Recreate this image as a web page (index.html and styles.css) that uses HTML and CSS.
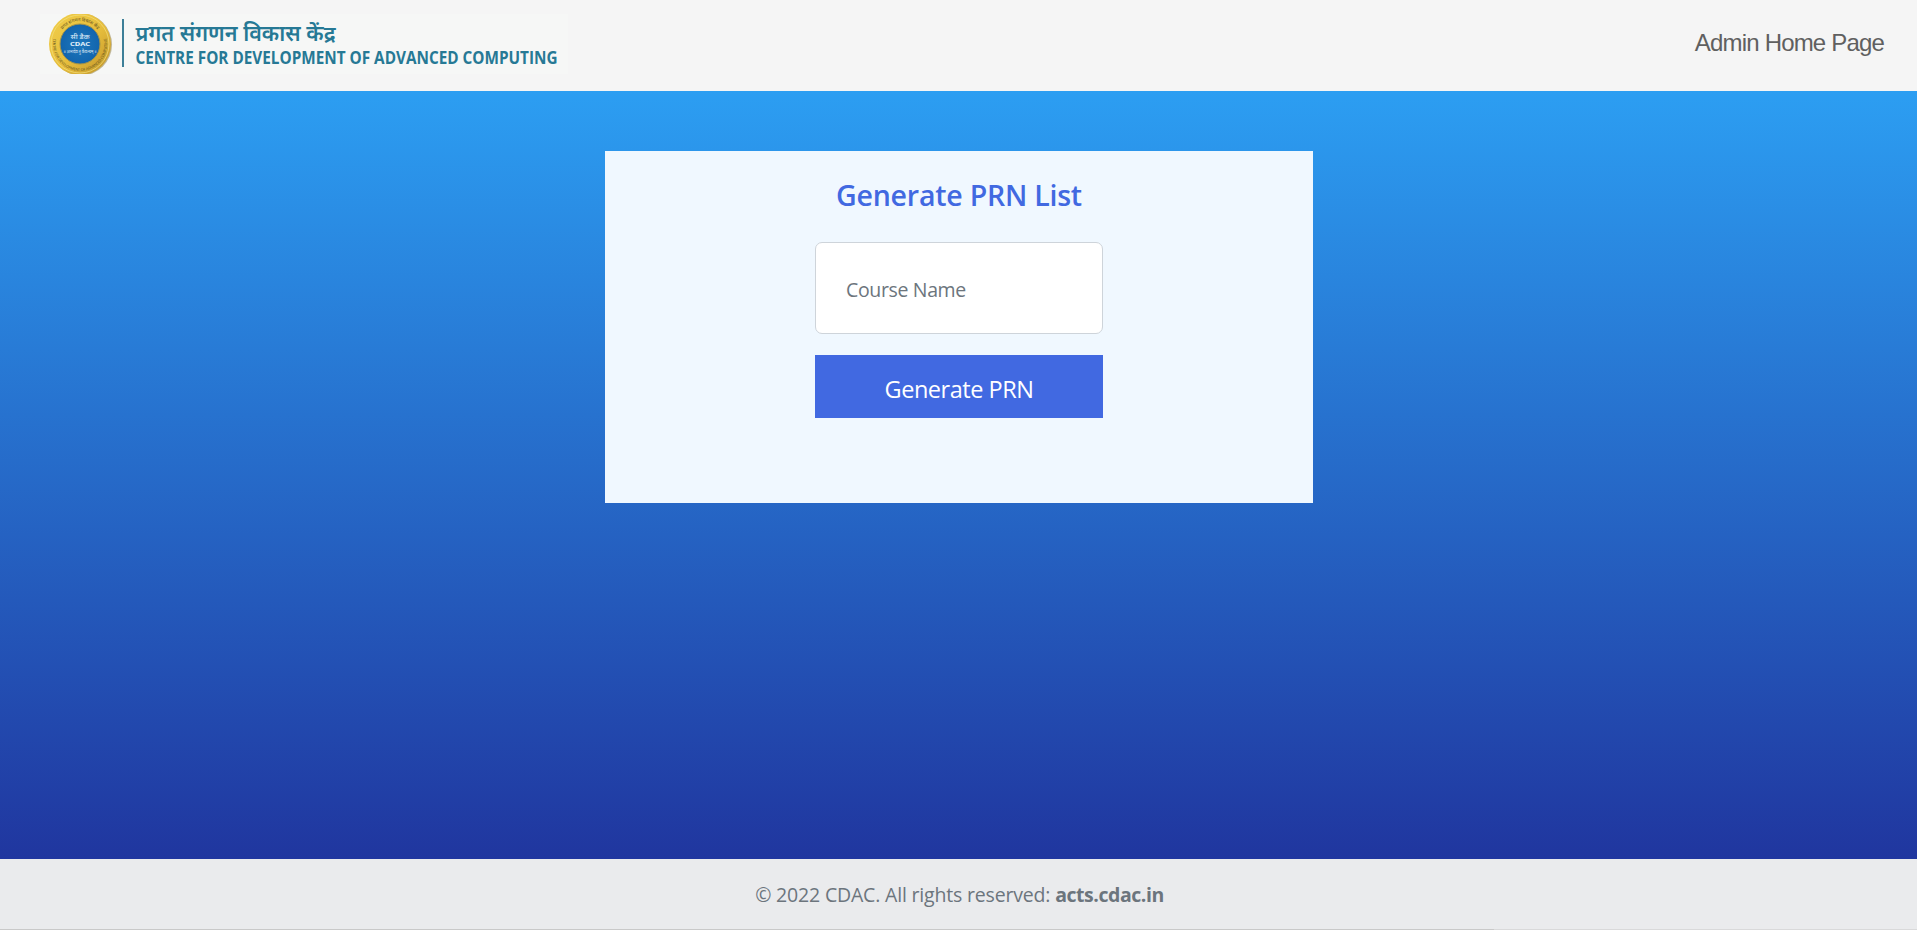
FILE: index.html
```html
<!DOCTYPE html>
<html lang="en">
<head>
<meta charset="utf-8">
<title>Generate PRN List</title>
<link rel="stylesheet" href="styles.css">
</head>
<body>
<header class="navbar">
  <svg class="logo" width="528" height="60" viewBox="0 0 528 60" role="img">
    <defs>
      <linearGradient id="gold" x1="0" y1="0" x2="1" y2="1">
        <stop offset="0" stop-color="#f1cf4a"/><stop offset=".55" stop-color="#e6bd3c"/><stop offset="1" stop-color="#bd9128"/>
      </linearGradient>
      <radialGradient id="blue"><stop offset="0" stop-color="#1c78bd"/><stop offset="1" stop-color="#1264ad"/></radialGradient>
      <path id="arcTop" d="M17.500 33A22.700 22.700 0 1 1 62.500 33"/>
      <path id="arcBottom" d="M14.200 22A27 27 0 1 0 65.800 22"/>
    </defs>
    <rect width="528" height="60" fill="#f6f7f6"/>
    <circle cx="41" cy="30.500" r="31" fill="#9b8b59" opacity=".6"/>
    <circle cx="40" cy="30" r="31" fill="url(#gold)"/>
    <circle cx="40" cy="30" r="29" fill="none" stroke="#f3df7c" stroke-width="1" opacity=".7"/>
    <circle cx="40" cy="30" r="20" fill="url(#blue)" stroke="#a69447" stroke-width="1"/>
    <g class="seal-ring">
      <text font-size="4.500"><textPath href="#arcTop" startOffset="50%" text-anchor="middle">प्रगत संगणन विकास केंद्र</textPath></text>
      <text font-size="3.600"><textPath href="#arcBottom" startOffset="50%" text-anchor="middle">CENTRE FOR DEVELOPMENT OF ADVANCED COMPUTING</textPath></text>
    </g>
    <g class="seal-text">
      <text x="40" y="24.500" font-size="6.500" textLength="19" lengthAdjust="spacingAndGlyphs">सी डैक</text>
      <text x="40" y="32" font-size="5.500" font-weight="700" textLength="20" lengthAdjust="spacingAndGlyphs">CDAC</text>
      <text x="40" y="38.500" font-size="4" textLength="33" lengthAdjust="spacingAndGlyphs">॥ ज्ञानादेव तु कैवल्यम् ॥</text>
    </g>
    <rect x="82" y="5" width="2" height="48" fill="#3d7f98"/>
    <text class="logo-hindi" x="95.500" y="27" textLength="200" lengthAdjust="spacingAndGlyphs">प्रगत संगणन विकास केंद्र</text>
    <text class="logo-english" x="95.500" y="50" textLength="422" lengthAdjust="spacingAndGlyphs">CENTRE FOR DEVELOPMENT OF ADVANCED COMPUTING</text>
  </svg>
  <a class="nav-link">Admin Home Page</a>
</header>
<main class="page">
  <form class="card">
    <h2 class="card-title">Generate PRN List</h2>
    <input class="course-input" type="text" placeholder="Course Name">
    <button class="submit" type="button"><span>Generate PRN</span></button>
  </form>
</main>
<footer class="footer"><p class="copyright">© 2022 CDAC. All rights reserved: <strong>acts.cdac.in</strong></p></footer>
<div class="bottom-line"></div>
</body>
</html>
```

FILE: styles.css
```css
* { box-sizing: border-box; }
body {
  margin: 0;
  height: 930px;
  display: flex;
  flex-direction: column;
  overflow: hidden;
  font-family: "Open Sans", "Noto Sans", sans-serif;
}
.navbar {
  height: 91px;
  flex: none;
  display: flex;
  justify-content: space-between;
  align-items: flex-start;
  padding: 14px 33px 0 40px;
  background: #f5f5f5;
}
.logo { display: block; }
.seal-ring { fill: #66551f; font-family: "Noto Sans", sans-serif; }
.seal-text { fill: #e4f1fa; text-anchor: middle; font-family: "Noto Sans", sans-serif; }
.logo-hindi { fill: #267995; font: 600 22px "Noto Sans", sans-serif; }
.logo-english { fill: #267995; font: 700 18px "Open Sans", sans-serif; }
.nav-link {
  margin-top: 15px;
  font: 24px/28px "Liberation Sans", sans-serif;
  letter-spacing: -0.820px;
  color: #606060;
}
.page {
  height: 768px;
  flex: none;
  display: flex;
  justify-content: center;
  align-items: flex-start;
  padding: 60px 0 0 1px;
  background: linear-gradient(180deg, #2c9ef2, #20369f);
}
.card {
  width: 708px;
  height: 352px;
  display: flex;
  flex-direction: column;
  align-items: center;
  padding-top: 24px;
  background: #f0f8ff;
}
.card-title {
  margin: 0 0 27px;
  font-size: 28.500px;
  font-weight: 600;
  line-height: 40px;
  letter-spacing: -0.220px;
  white-space: nowrap;
  color: #4169e1;
}
.course-input {
  width: 288px;
  height: 92px;
  margin-bottom: 21px;
  padding: 2px 30px 0;
  border: 1px solid #ced4da;
  border-radius: 7px;
  background: #fff;
  font: 19.500px "Open Sans", sans-serif;
  letter-spacing: -0.350px;
}
.course-input::placeholder { color: #6c757d; opacity: 1; }
.submit {
  width: 288px;
  height: 63px;
  padding: 4px 0 0;
  border: 0;
  background: #4169e1;
  color: #fff;
  font: 23.500px "Open Sans", sans-serif;
  letter-spacing: -0.480px;
}
.footer {
  height: 70px;
  flex: none;
  display: flex;
  justify-content: center;
  padding: 21px 0 0 2px;
  background: #eaebed;
}
.copyright {
  margin: 0;
  font-size: 19.500px;
  line-height: 30px;
  letter-spacing: -0.180px;
  color: #6c757d;
}
.copyright strong { letter-spacing: -0.450px; }
.bottom-line { height: 1px; flex: none; background: linear-gradient(90deg, #c9c9c9 1494px, #d9d9da 1494px); }
```
